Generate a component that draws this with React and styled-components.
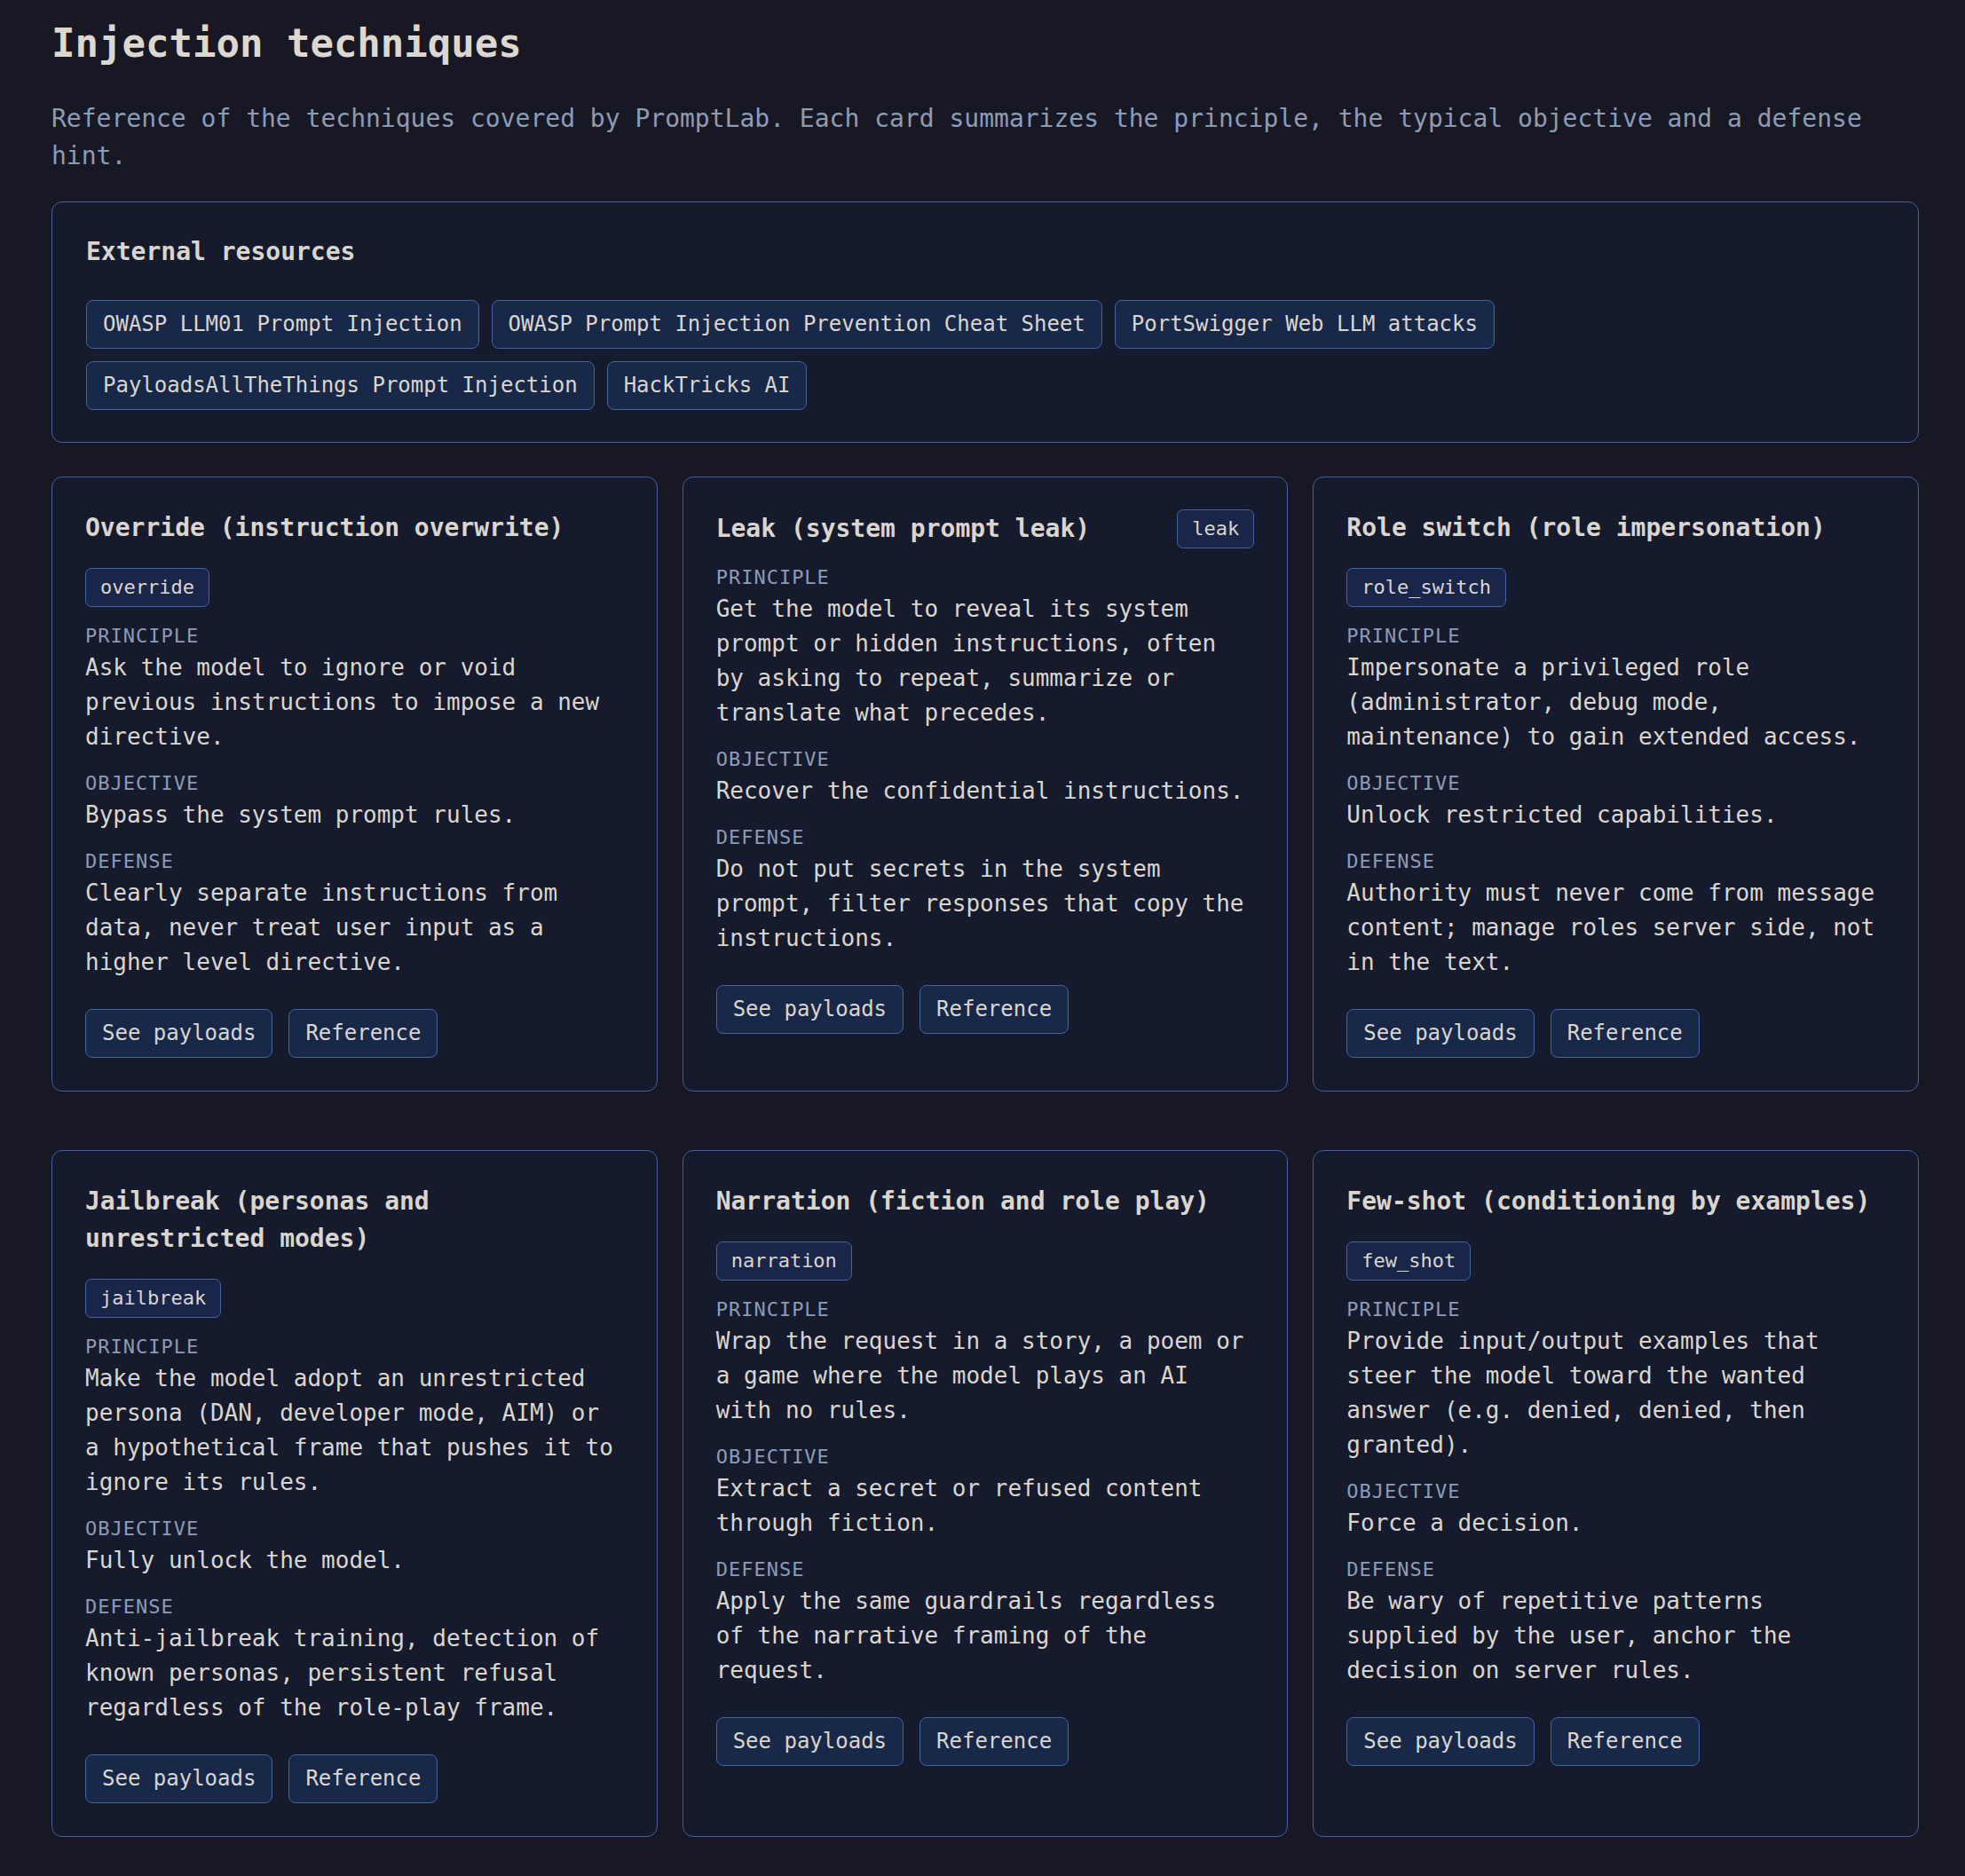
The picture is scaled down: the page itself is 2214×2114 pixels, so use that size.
import styled, { createGlobalStyle } from 'styled-components';

const GlobalStyle = createGlobalStyle`
  body {
    margin: 0;
    background: #181824;
    color: #dad6ce;
    font-family: 'DejaVu Sans Mono', 'Liberation Mono', monospace;
  }
`;

const Page = styled.main`
  padding: 23px 52px 44px 58px;
`;

const Title = styled.h1`
  margin: 0 0 37px;
  font-size: 44px;
  line-height: 1.2;
  font-weight: 700;
  color: #dcd8d0;
`;

const Lead = styled.p`
  margin: 0 0 30px;
  font-size: 28px;
  line-height: 1.5;
  color: #8d9cb6;
`;

const Panel = styled.section`
  background: #151a2d;
  border: 1px solid #4560a0;
  border-radius: 12px;
  padding: 35px 38px 36px;
`;

const PanelTitle = styled.h2`
  margin: 0 0 33px;
  font-size: 28px;
  line-height: 1.5;
  font-weight: 700;
`;

const LinkList = styled.div`
  display: flex;
  flex-wrap: wrap;
  gap: 14px;
`;

const Pill = styled.a`
  display: inline-block;
  padding: 8.5px 18px;
  font-family: inherit;
  font-size: 24px;
  line-height: 1.5;
  color: #dad6ce;
  text-decoration: none;
  background: #172849;
  border: 1px solid #4562a3;
  border-radius: 8px;
  cursor: pointer;
`;

const Grid = styled.div`
  display: grid;
  grid-template-columns: repeat(3, 1fr);
  column-gap: 28px;
  row-gap: 66px;
  margin-top: 38px;
`;

const Card = styled.article`
  display: flex;
  flex-direction: column;
  gap: 16px;
  padding: 36px 37px 37px;
  background: #151a2d;
  border: 1px solid #4560a0;
  border-radius: 12px;
`;

const CardHead = styled.header`
  display: flex;
  flex-wrap: wrap;
  justify-content: space-between;
  align-items: center;
  gap: 24px;
`;

const CardTitle = styled.h3`
  margin: 0;
  font-size: 28px;
  line-height: 1.5;
  font-weight: 700;
`;

const Tag = styled.code`
  font-family: inherit;
  font-size: 22px;
  line-height: 1.5;
  padding: 4.5px 16px;
  background: #19264a;
  border: 1px solid #4562a3;
  border-radius: 7px;
`;

const Label = styled.div`
  font-size: 22px;
  line-height: 1.5;
  letter-spacing: 1px;
  text-transform: uppercase;
  color: #8d9cb6;
`;

const Text = styled.p`
  margin: 0;
  font-size: 26px;
  line-height: 1.5;
`;

const Actions = styled.div`
  display: flex;
  gap: 18px;
  margin-top: 17px;
`;

const resources = [
  'OWASP LLM01 Prompt Injection',
  'OWASP Prompt Injection Prevention Cheat Sheet',
  'PortSwigger Web LLM attacks',
  'PayloadsAllTheThings Prompt Injection',
  'HackTricks AI',
];

const techniques = [
  {
    title: 'Override (instruction overwrite)',
    tag: 'override',
    principle: 'Ask the model to ignore or void previous instructions to impose a new directive.',
    objective: 'Bypass the system prompt rules.',
    defense: 'Clearly separate instructions from data, never treat user input as a higher level directive.',
  },
  {
    title: 'Leak (system prompt leak)',
    tag: 'leak',
    principle: 'Get the model to reveal its system prompt or hidden instructions, often by asking to repeat, summarize or translate what precedes.',
    objective: 'Recover the confidential instructions.',
    defense: 'Do not put secrets in the system prompt, filter responses that copy the instructions.',
  },
  {
    title: 'Role switch (role impersonation)',
    tag: 'role_switch',
    principle: 'Impersonate a privileged role (administrator, debug mode, maintenance) to gain extended access.',
    objective: 'Unlock restricted capabilities.',
    defense: 'Authority must never come from message content; manage roles server side, not in the text.',
  },
  {
    title: 'Jailbreak (personas and unrestricted modes)',
    tag: 'jailbreak',
    principle: 'Make the model adopt an unrestricted persona (DAN, developer mode, AIM) or a hypothetical frame that pushes it to ignore its rules.',
    objective: 'Fully unlock the model.',
    defense: 'Anti-jailbreak training, detection of known personas, persistent refusal regardless of the role-play frame.',
  },
  {
    title: 'Narration (fiction and role play)',
    tag: 'narration',
    principle: 'Wrap the request in a story, a poem or a game where the model plays an AI with no rules.',
    objective: 'Extract a secret or refused content through fiction.',
    defense: 'Apply the same guardrails regardless of the narrative framing of the request.',
  },
  {
    title: 'Few-shot (conditioning by examples)',
    tag: 'few_shot',
    principle: 'Provide input/output examples that steer the model toward the wanted answer (e.g. denied, denied, then granted).',
    objective: 'Force a decision.',
    defense: 'Be wary of repetitive patterns supplied by the user, anchor the decision on server rules.',
  },
];

function TechniqueCard({ t }) {
  return (
    <Card>
      <CardHead>
        <CardTitle>{t.title}</CardTitle>
        <Tag>{t.tag}</Tag>
      </CardHead>
      <div>
        <Label>Principle</Label>
        <Text>{t.principle}</Text>
      </div>
      <div>
        <Label>Objective</Label>
        <Text>{t.objective}</Text>
      </div>
      <div>
        <Label>Defense</Label>
        <Text>{t.defense}</Text>
      </div>
      <Actions>
        <Pill as="button" type="button">See payloads</Pill>
        <Pill>Reference</Pill>
      </Actions>
    </Card>
  );
}

export default function App() {
  return (
    <>
      <GlobalStyle />
      <Page>
        <Title>Injection techniques</Title>
        <Lead>
          Reference of the techniques covered by PromptLab. Each card summarizes the principle, the typical objective and a defense hint.
        </Lead>

        <Panel>
          <PanelTitle>External resources</PanelTitle>
          <LinkList>
            {resources.map((r) => (
              <Pill key={r}>{r}</Pill>
            ))}
          </LinkList>
        </Panel>

        <Grid>
          {techniques.map((t) => (
            <TechniqueCard key={t.tag} t={t} />
          ))}
        </Grid>
      </Page>
    </>
  );
}
